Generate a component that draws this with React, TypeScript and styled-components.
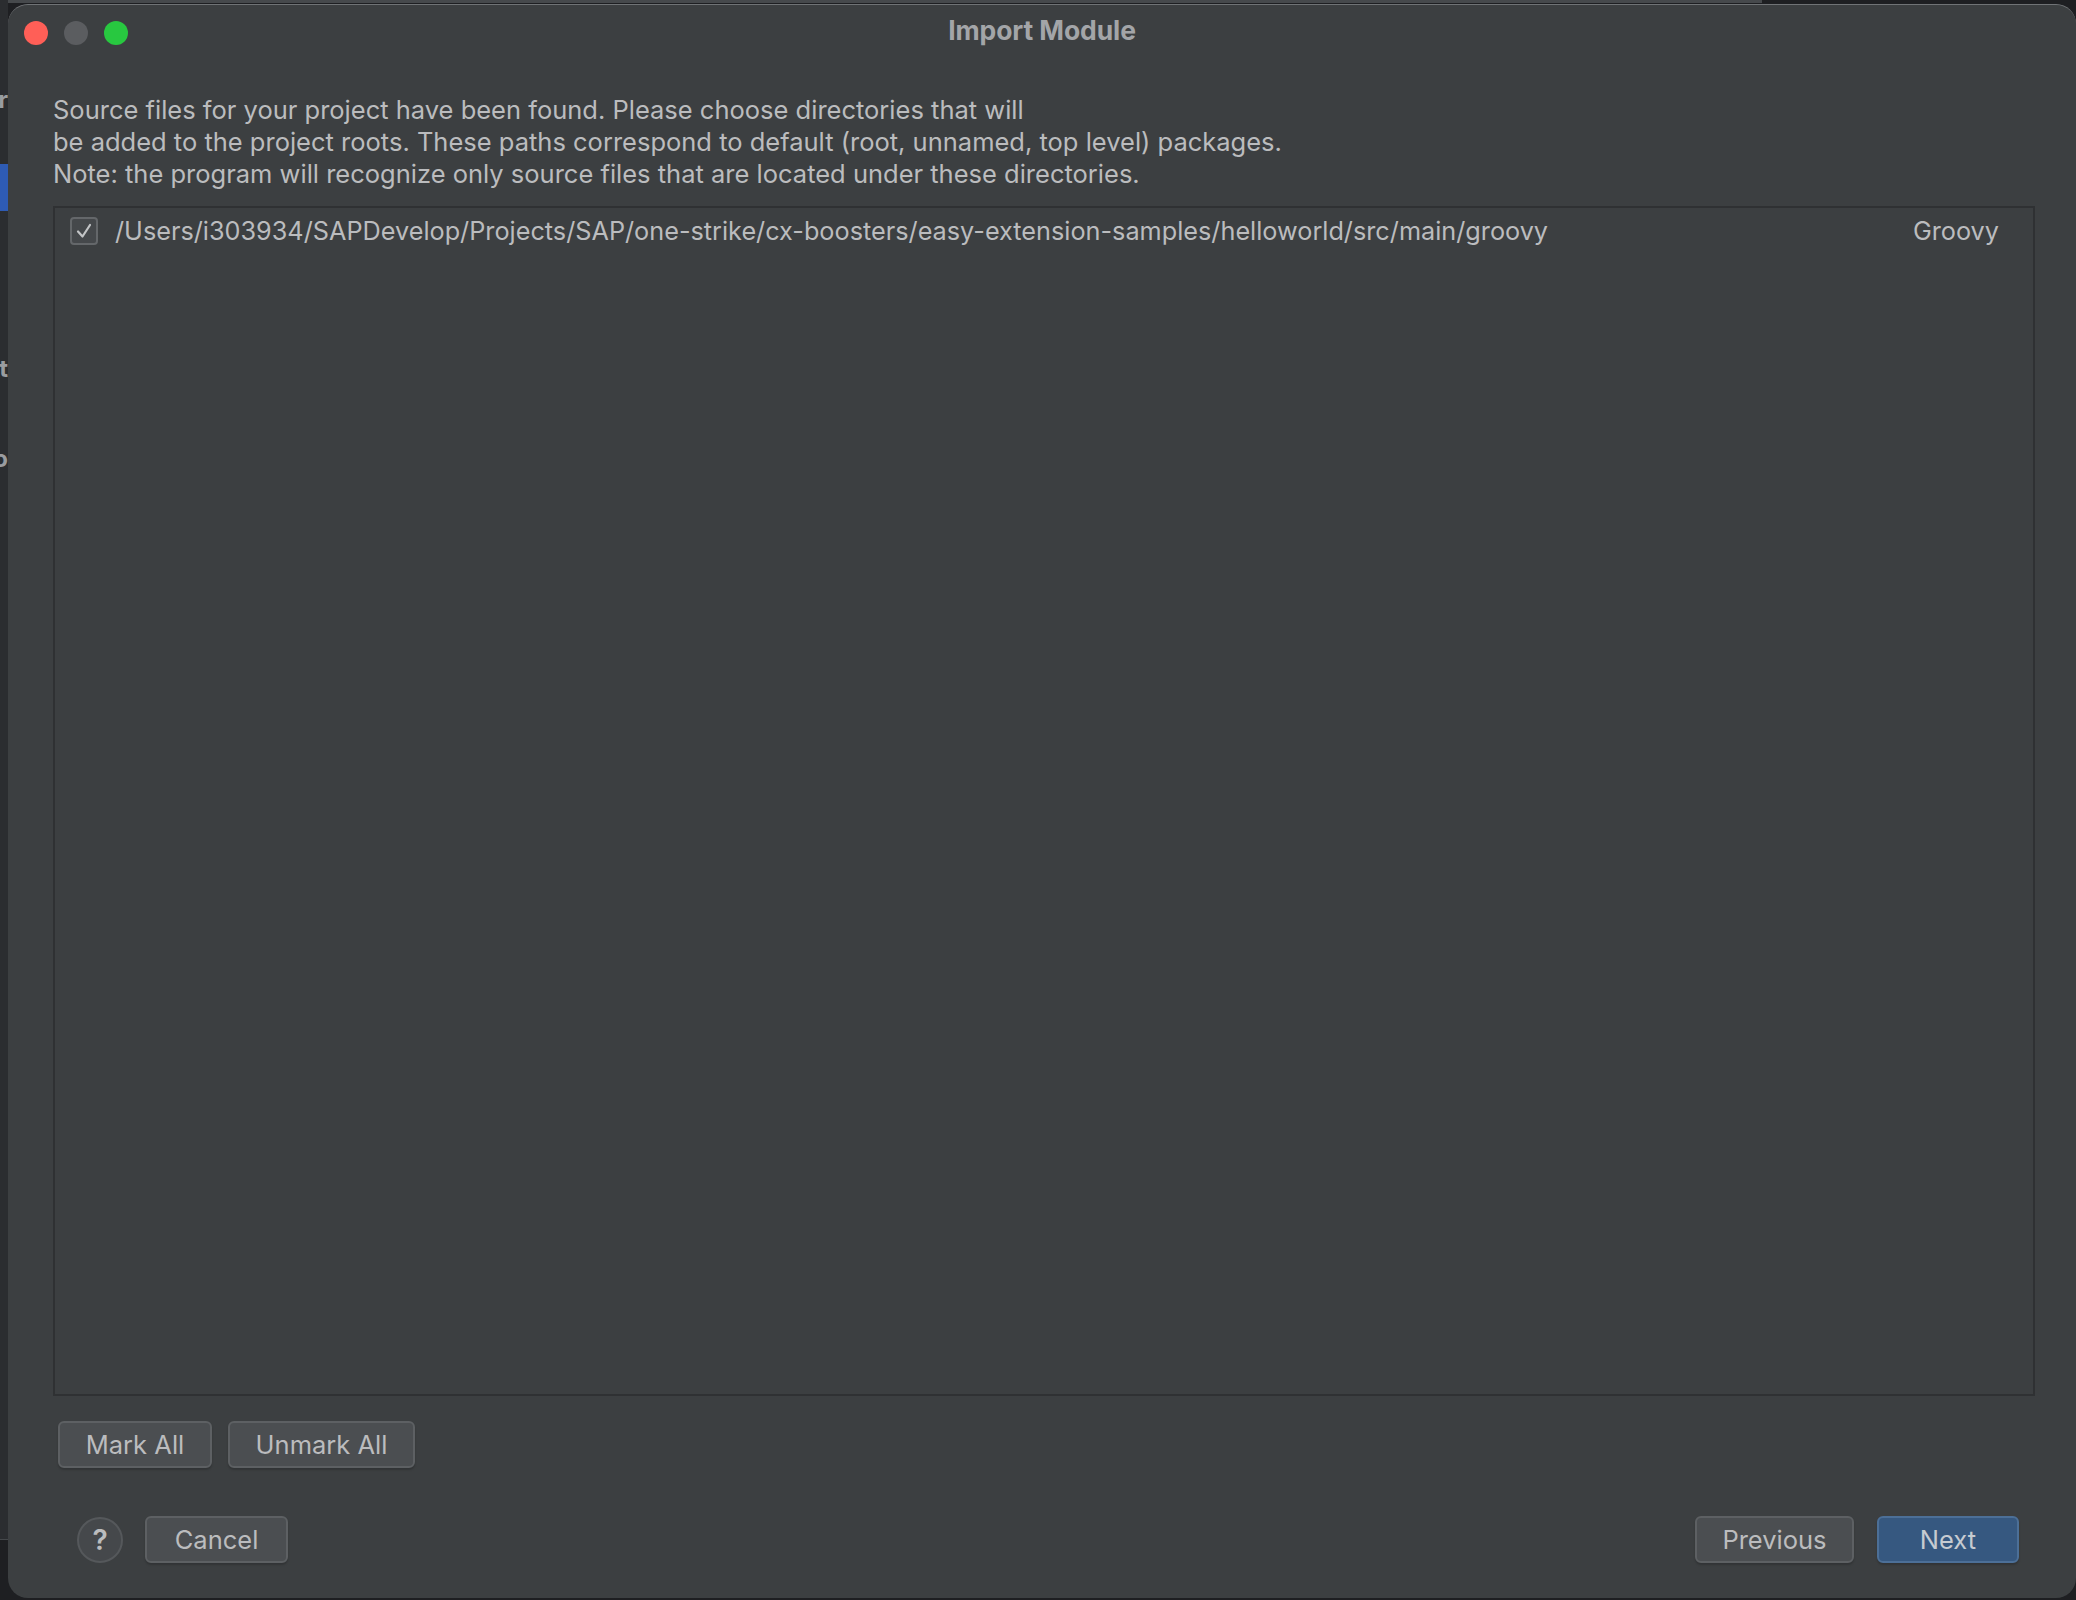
import styled, { createGlobalStyle } from "styled-components";

const GlobalStyle = createGlobalStyle`
  html, body {
    margin: 0;
    padding: 0;
    background: #1e1f22;
  }
  body {
    font-family: Inter, "Noto Sans", "Liberation Sans", sans-serif;
    -webkit-font-smoothing: antialiased;
  }
`;

const palette = {
  panel: "#3c3f41",
  text: "#bbbcbe",
  title: "#a3a5a8",
  border: "#2f3133",
  button: "#4b4e51",
  buttonBorder: "#5d6063",
  primary: "#365880",
  primaryBorder: "#4c6f97",
};

const Desktop = styled.div`
  display: flex;
  width: 2076px;
  height: 1600px;
  overflow: hidden;
  background:
    linear-gradient(to right, #46494c 0 1762px, #1e1f22 1762px) top left / 100% 3px no-repeat,
    #1e1f22;
`;

const BehindWindow = styled.div`
  flex: none;
  width: 8px;
  height: 1535px;
  padding-top: 4px;
  background: #2b2d30;
  border-bottom: 1px solid #45484b;
  display: flex;
  flex-direction: column;
  overflow: hidden;
`;

const Fragment = styled.div<{ $top: number }>`
  margin-top: ${(p) => p.$top}px;
  height: 20px;
  display: flex;
  justify-content: flex-end;
  font-size: 24px;
  font-weight: 700;
  line-height: 20px;
  color: #9a9ca0;
  white-space: nowrap;
`;

const Selection = styled.div`
  margin-top: 54px;
  height: 47px;
  background: #2e5bb4;
`;

const Window = styled.div`
  flex: 1;
  margin-top: 4px;
  height: 1594px;
  display: flex;
  flex-direction: column;
  background: ${palette.panel};
  border-top: 1px solid #707376;
  border-radius: 20px;
  box-sizing: border-box;
  overflow: hidden;
`;

const TitleBar = styled.div`
  height: 52px;
  display: grid;
  grid-template-columns: 1fr auto 1fr;
  align-items: center;
  padding: 0 16px;
`;

const Lights = styled.div`
  display: flex;
  gap: 16px;
  margin-top: 4px;
`;

const Light = styled.span<{ $color: string }>`
  width: 24px;
  height: 24px;
  border-radius: 50%;
  background: ${(p) => p.$color};
`;

const Title = styled.div`
  font-size: 26.5px;
  font-weight: 700;
  color: ${palette.title};
  letter-spacing: -0.1px;
  margin-bottom: 2px;
`;

const Body = styled.div`
  flex: 1;
  display: flex;
  flex-direction: column;
  padding: 0 41px 35px 45px;
`;

const Description = styled.p`
  margin: 37px 0 0;
  font-size: 25.5px;
  line-height: 32px;
  color: ${palette.text};
`;

const ListBox = styled.div`
  flex: 1;
  margin-top: 16px;
  border: 2px solid ${palette.border};
  padding: 7px 34px 0 15px;
`;

const Row = styled.div`
  display: flex;
  align-items: center;
  height: 32px;
  gap: 17px;
  font-size: 25.25px;
  color: ${palette.text};
`;

const Box = styled.span`
  flex: none;
  width: 28px;
  height: 28px;
  box-sizing: border-box;
  border: 2px solid #64676a;
  border-radius: 4px;
  background: #45484b;
  display: flex;
  align-items: center;
  justify-content: center;
`;

const PathText = styled.span`
  flex: 1;
  white-space: nowrap;
`;

const ButtonRow = styled.div<{ $top: number; $inset: number }>`
  display: flex;
  align-items: center;
  gap: 16px;
  margin-top: ${(p) => p.$top}px;
  padding: 0 ${(p) => p.$inset}px 0 5px;
`;

const Spacer = styled.div`
  flex: 1;
`;

const Button = styled.button<{ $width: number; $primary?: boolean }>`
  width: ${(p) => p.$width}px;
  height: 47px;
  box-sizing: border-box;
  border-radius: 6px;
  border: 2px solid ${(p) => (p.$primary ? palette.primaryBorder : palette.buttonBorder)};
  background: ${(p) => (p.$primary ? palette.primary : palette.button)};
  color: ${(p) => (p.$primary ? "#c6cbd1" : palette.text)};
  font-family: inherit;
  font-size: 25.5px;
  padding: 0;
  box-shadow: 0 2px 2px rgba(0, 0, 0, 0.18);
`;

const PreviousButton = styled(Button)`
  margin-right: 7px;
`;

const HelpButton = styled.button`
  width: 46px;
  height: 46px;
  box-sizing: border-box;
  border-radius: 50%;
  border: 2px solid #55585b;
  background: #45484b;
  color: ${palette.text};
  font-family: inherit;
  font-size: 28px;
  font-weight: 600;
  padding: 0;
  margin: 0 6px 0 19px;
`;

export default function App() {
  return (
    <>
      <GlobalStyle />
      <Desktop>
        <BehindWindow>
          <Fragment $top={86}>r</Fragment>
          <Selection />
          <Fragment $top={148}>t</Fragment>
          <Fragment $top={70}>o</Fragment>
        </BehindWindow>
        <Window>
          <TitleBar>
            <Lights>
              <Light $color="#ff5f57" />
              <Light $color="#5b5d60" />
              <Light $color="#28c840" />
            </Lights>
            <Title>Import Module</Title>
            <span />
          </TitleBar>
          <Body>
            <Description>
              Source files for your project have been found. Please choose directories that will
              <br />
              be added to the project roots. These paths correspond to default (root, unnamed, top level) packages.
              <br />
              Note: the program will recognize only source files that are located under these directories.
            </Description>
            <ListBox>
              <Row>
                <Box>
                  <svg width="20" height="20" viewBox="0 0 20 20">
                    <path d="M4 10.5 L8.5 15.5 L16 4" fill="none" stroke="#c2c4c6" strokeWidth="2.2" strokeLinecap="round" strokeLinejoin="round" />
                  </svg>
                </Box>
                <PathText>/Users/i303934/SAPDevelop/Projects/SAP/one-strike/cx-boosters/easy-extension-samples/helloworld/src/main/groovy</PathText>
                <span>Groovy</span>
              </Row>
            </ListBox>
            <ButtonRow $top={25} $inset={0}>
              <Button $width={154}>Mark All</Button>
              <Button $width={187}>Unmark All</Button>
            </ButtonRow>
            <ButtonRow $top={48} $inset={16}>
              <HelpButton>?</HelpButton>
              <Button $width={143}>Cancel</Button>
              <Spacer />
              <PreviousButton $width={159}>Previous</PreviousButton>
              <Button $width={142} $primary>
                Next
              </Button>
            </ButtonRow>
          </Body>
        </Window>
      </Desktop>
    </>
  );
}
